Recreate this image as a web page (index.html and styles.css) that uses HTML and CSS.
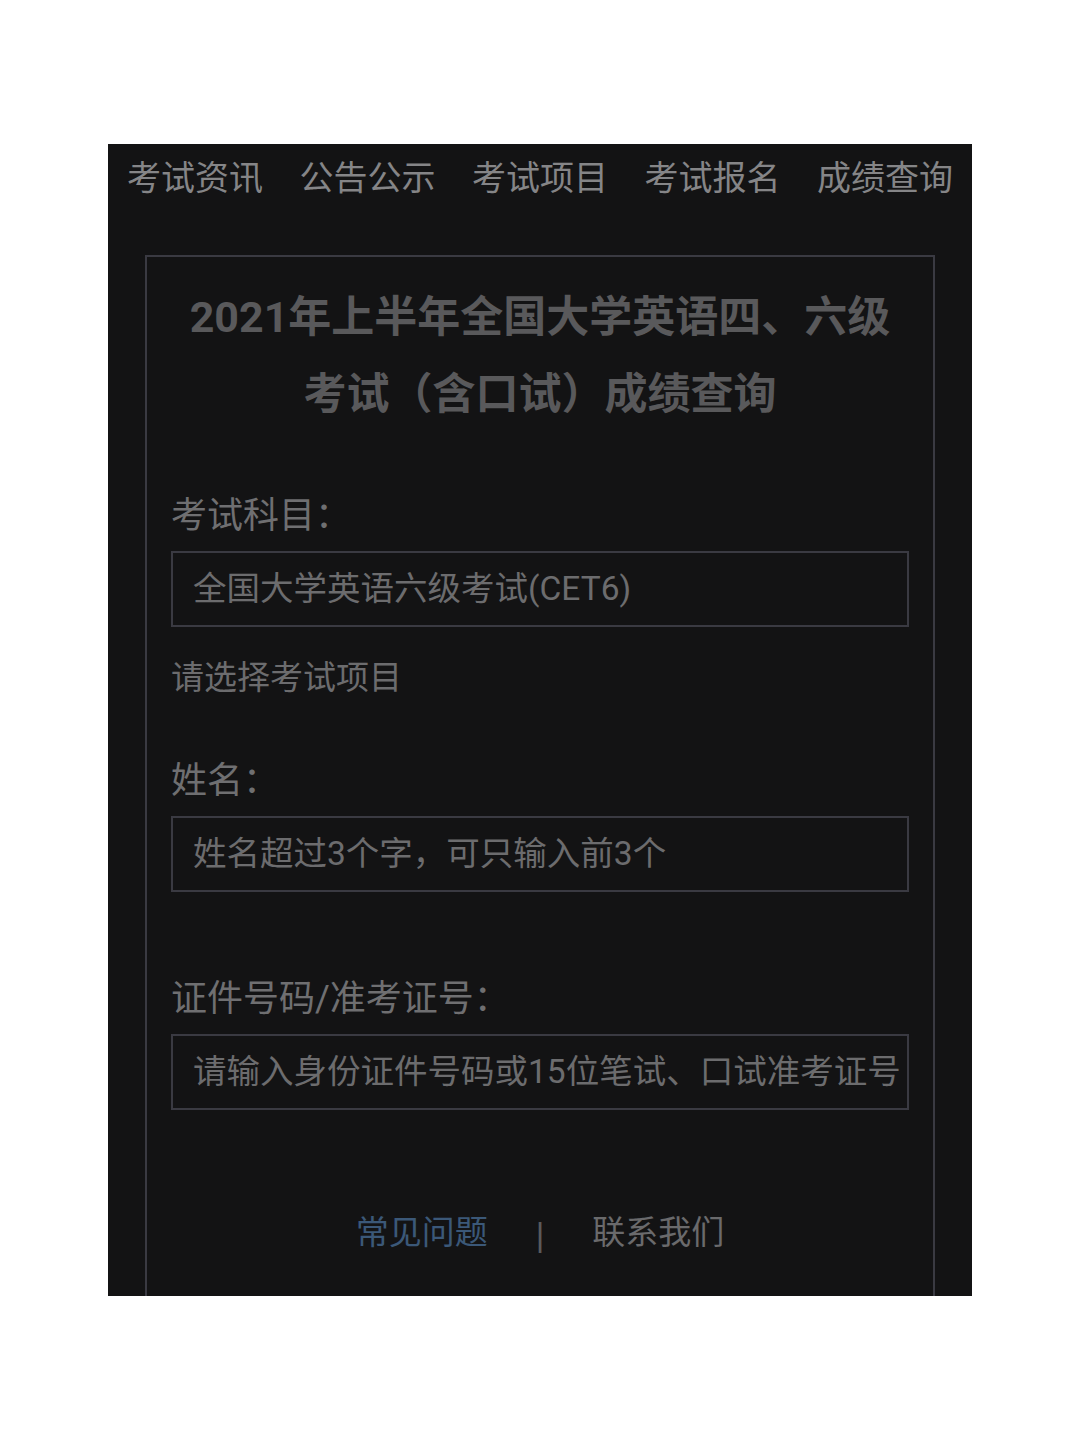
FILE: index.html
```html
<!DOCTYPE html>
<html lang="zh-CN">
<head>
<meta charset="utf-8">
<title>成绩查询</title>
<link rel="stylesheet" href="styles.css">
</head>
<body>
<div class="panel">
  <nav class="nav">
    <span class="nav-item">考试资讯</span>
    <span class="nav-item">公告公示</span>
    <span class="nav-item">考试项目</span>
    <span class="nav-item">考试报名</span>
    <span class="nav-item">成绩查询</span>
  </nav>
  <div class="box">
    <h1 class="title">2021年上半年全国大学英语四、六级<br>考试（含口试）成绩查询</h1>
    <div class="label first">考试科目：</div>
    <div class="input">全国大学英语六级考试(CET6)</div>
    <div class="hint">请选择考试项目</div>
    <div class="label second">姓名：</div>
    <div class="input">姓名超过3个字，可只输入前3个</div>
    <div class="label third">证件号码/准考证号：</div>
    <div class="input">请输入身份证件号码或15位笔试、口试准考证号</div>
    <div class="footer">
      <span class="link faq">常见问题</span>
      <span class="sep">|</span>
      <span class="link contact">联系我们</span>
    </div>
  </div>
</div>
</body>
</html>
```
FILE: styles.css
```css
html, body {
  margin: 0;
  padding: 0;
  background: #ffffff;
}
body {
  font-family: Roboto, "Noto Sans CJK SC", sans-serif;
  padding-top: 144px;
}
.panel {
  margin-left: 108px;
  width: 864px;
  height: 1152px;
  background: #131314;
  overflow: hidden;
  box-sizing: border-box;
}
.nav {
  display: flex;
  justify-content: space-between;
  padding: 0 19px;
  height: 68px;
  line-height: 68px;
  font-size: 34px;
  color: #858587;
}
.nav-item {
  white-space: nowrap;
}
.box {
  margin: 43px 37px 0;
  border: 2px solid #3a3a42;
  border-bottom: none;
  padding: 22px 24px 200px;
  min-height: 1200px;
  box-sizing: border-box;
}
.title {
  margin: 0;
  text-align: center;
  font-size: 43px;
  line-height: 77px;
  font-weight: 700;
  color: #59595b;
}
.label {
  font-size: 36px;
  line-height: 50px;
  color: #6f6f71;
}
.label.first { margin-top: 58px; }
.label.second { margin-top: 53px; }
.label.third { margin-top: 82px; }
.input {
  margin-top: 10px;
  height: 76px;
  box-sizing: border-box;
  border: 2px solid #3a3a42;
  padding: 0 20px;
  font-size: 33.5px;
  line-height: 72px;
  color: #6c6c6e;
  white-space: nowrap;
  overflow: hidden;
}
.hint {
  margin-top: 26px;
  font-size: 33px;
  line-height: 50px;
  color: #6c6c6e;
}
.footer {
  margin-top: 98px;
  display: flex;
  justify-content: center;
  align-items: center;
  font-size: 33px;
  line-height: 50px;
}
.faq { color: #3b5878; }
.contact { color: #6a6a6c; }
.sep {
  color: #5a5a5c;
  margin: 0 48px;
  font-family: "Liberation Sans", sans-serif;
  font-size: 33px;
  position: relative;
  top: 2px;
}
```
